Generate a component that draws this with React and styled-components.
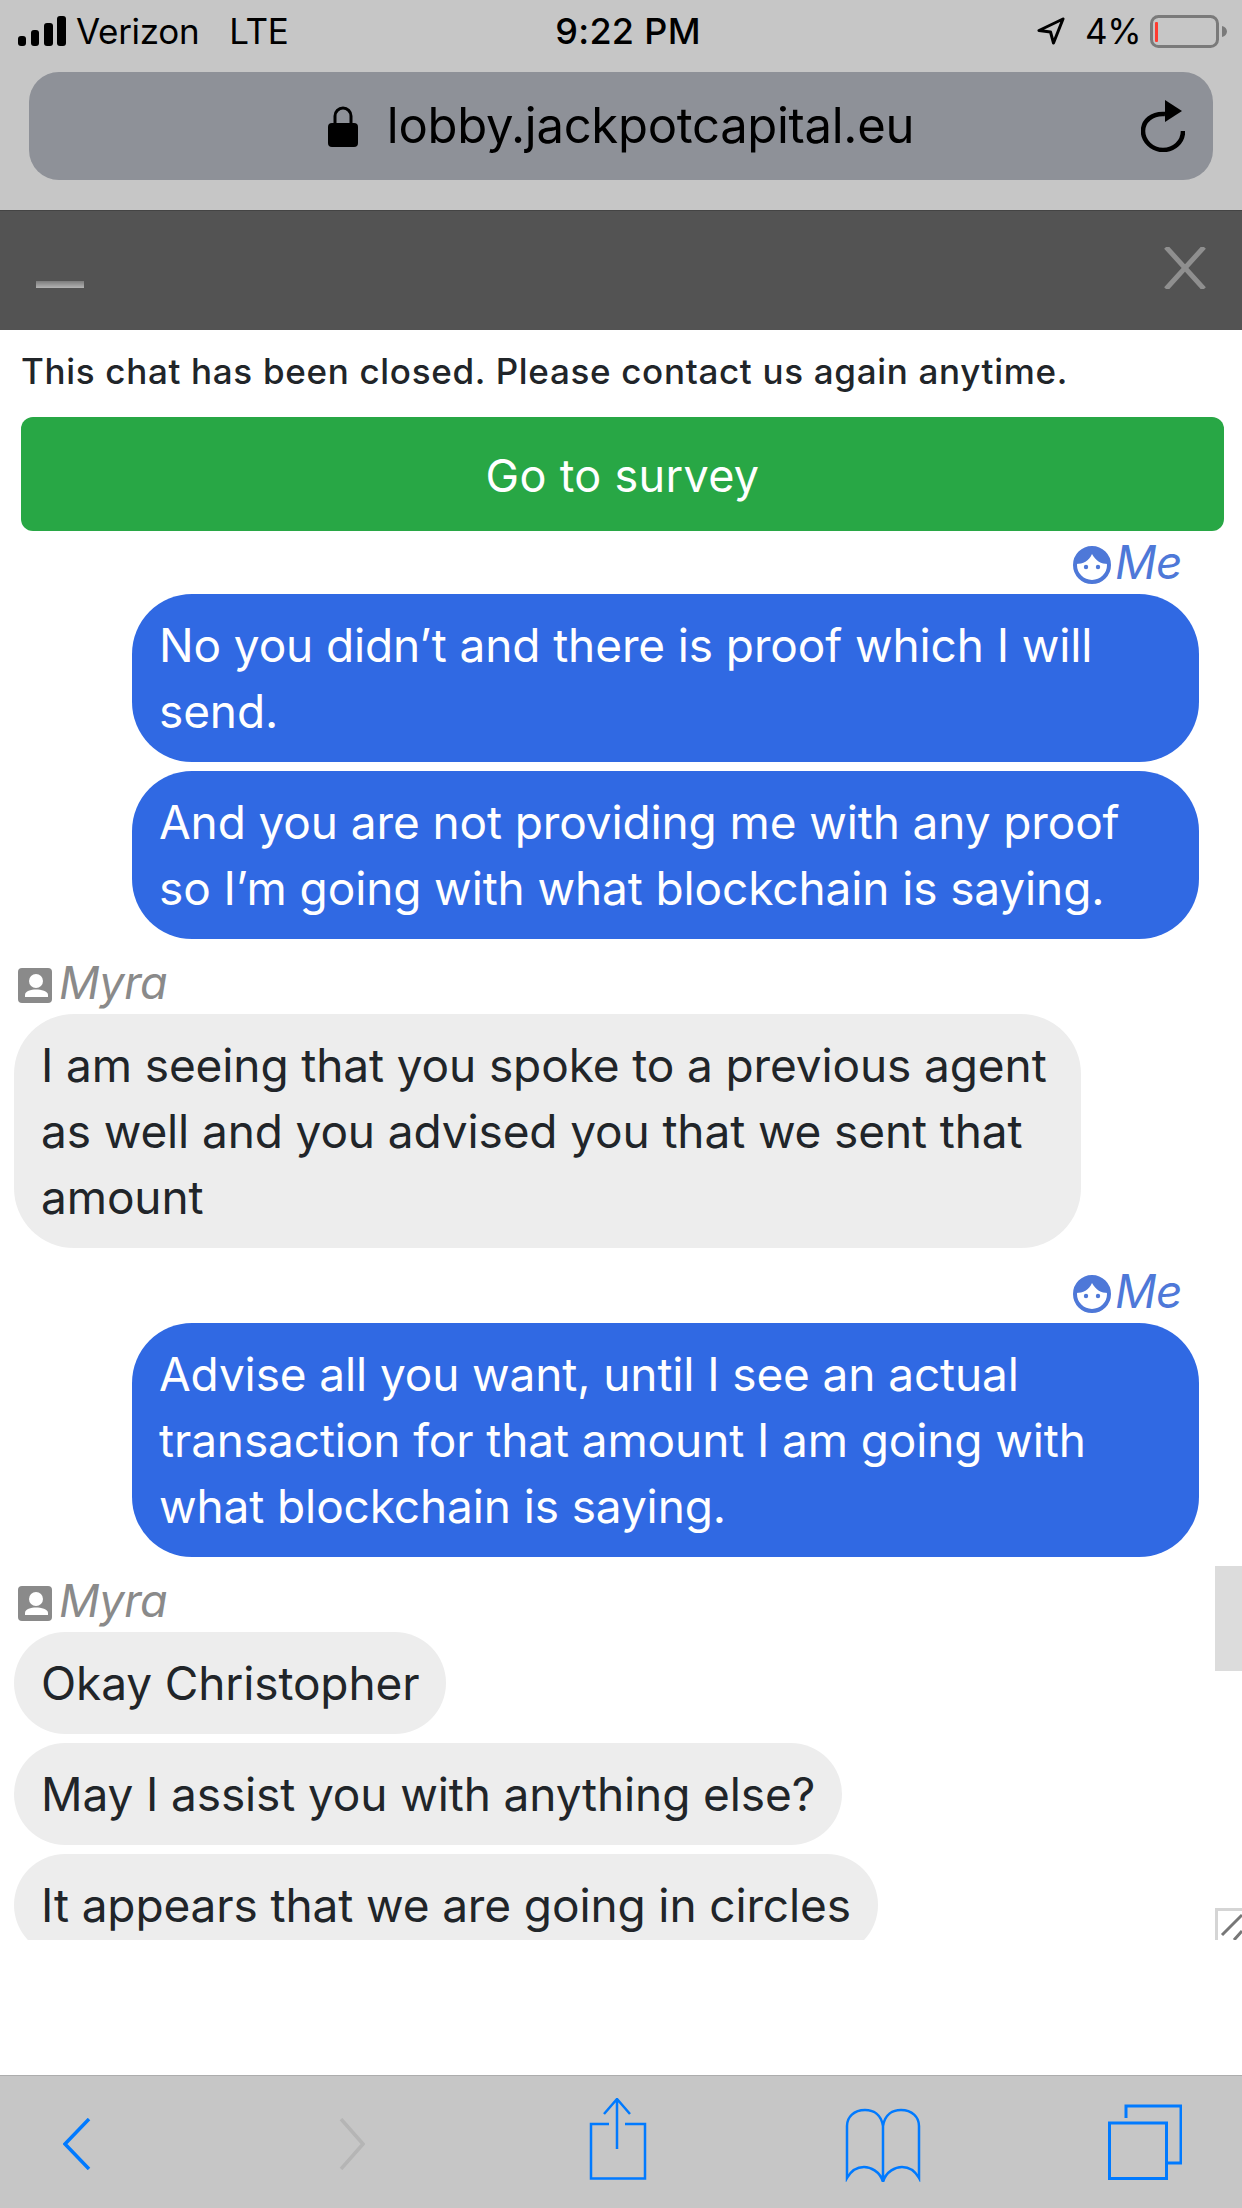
import React from "react";
import styled, { createGlobalStyle } from "styled-components";

const Global = createGlobalStyle`
  html, body { margin: 0; padding: 0; background: #fff; }
  * { box-sizing: border-box; }
  body { font-family: Inter, "Liberation Sans", sans-serif; }
`;

const Page = styled.div`
  width: 1242px;
  height: 2208px;
  display: flex;
  flex-direction: column;
  overflow: hidden;
  background: #fff;
`;

const BrowserTop = styled.header`
  height: 210px;
  flex: none;
  background: #c6c6c6;
  display: flex;
  flex-direction: column;
`;

const StatusBar = styled.div`
  height: 72px;
  padding: 0 15px 10px 18px;
  display: grid;
  grid-template-columns: 1fr auto 1fr;
  align-items: center;
  color: #000;
`;

const StatusLeft = styled.div`
  display: flex;
  align-items: center;
`;

const StatusRight = styled.div`
  display: flex;
  align-items: center;
  justify-content: flex-end;
`;

const Carrier = styled.span`
  font-size: 35px;
  line-height: 40px;
  letter-spacing: -0.3px;
  margin-left: ${(p) => p.$gap}px;
`;

const Clock = styled.span`
  font-size: 36px;
  line-height: 40px;
  font-weight: 500;
  letter-spacing: 0.3px;
  margin-left: 11px;
`;

const Percent = styled.span`
  font-size: 35px;
  line-height: 40px;
  letter-spacing: -0.5px;
  margin: 0 9px 0 20px;
`;

const AddressBar = styled.div`
  height: 108px;
  margin: 0 29px;
  padding: 0 28px;
  border-radius: 30px;
  background: #8e9198;
  display: grid;
  grid-template-columns: 1fr auto 1fr;
  align-items: center;
`;

const AddressCenter = styled.div`
  grid-column: 2;
  display: flex;
  align-items: center;
  gap: 29px;
`;

const Url = styled.span`
  font-size: 49px;
  line-height: 60px;
  color: #000;
  letter-spacing: -0.3px;
`;

const ReloadSlot = styled.div`
  grid-column: 3;
  justify-self: end;
  display: flex;
`;

const ChatHeader = styled.div`
  height: 120px;
  flex: none;
  background: #535353;
  border-top: 1px solid #444;
  padding: 36px 36px 0;
  display: flex;
  justify-content: space-between;
  align-items: flex-start;
`;

const Minimize = styled.div`
  width: 48px;
  height: 7px;
  margin-top: 34px;
  background: linear-gradient(#7c7c7c, #b4b4b4);
`;

const Notice = styled.p`
  margin: 0;
  padding: 19px 21px 0;
  height: 87px;
  flex: none;
  font-size: 35px;
  font-weight: 450;
  line-height: 44px;
  color: #212529;
  letter-spacing: 0.68px;
`;

const SurveyButton = styled.button`
  flex: none;
  height: 114px;
  margin: 0 18px 0 21px;
  padding: 3px 0 0;
  border: 0;
  border-radius: 12px;
  background: #28a745;
  color: #fff;
  font: 400 45px/60px Inter, "Liberation Sans", sans-serif;
  letter-spacing: 0.3px;
`;

const ChatArea = styled.div`
  position: relative;
  height: 1409px;
  flex: none;
  overflow: hidden;
`;

const Log = styled.div`
  display: flex;
  flex-direction: column;
  padding-top: 9px;
`;

const Label = styled.div`
  display: flex;
  align-items: center;
  height: 54px;
  padding-bottom: 4px;
  gap: ${(p) => (p.$me ? 4 : 7)}px;
  font-style: italic;
  font-size: ${(p) => (p.$me ? 46 : 45)}px;
  letter-spacing: -0.5px;
  align-self: ${(p) => (p.$me ? "flex-end" : "flex-start")};
  color: ${(p) => (p.$me ? "#4e78d8" : "#8a8a8a")};
  margin: ${(p) => p.$top || 0}px ${(p) => (p.$me ? 60 : 0)}px 0 ${(p) => (p.$me ? 0 : 18)}px;
`;

const LabelName = styled.span`
  padding-bottom: 6px;
`;

const Bubble = styled.div`
  max-width: 1067px;
  padding: 18px 27px;
  margin-bottom: 9px;
  font-size: 46px;
  line-height: 66px;
  letter-spacing: -0.12px;
  border-radius: 60px;
  align-self: ${(p) => (p.$me ? "flex-end" : "flex-start")};
  margin-right: ${(p) => (p.$me ? 43 : 0)}px;
  margin-left: ${(p) => (p.$me ? 0 : 14)}px;
  width: ${(p) => (p.$wide ? "1067px" : "auto")};
  background: ${(p) => (p.$me ? "#3069e3" : "#ededed")};
  color: ${(p) => (p.$me ? "#fff" : "#212529")};
`;

const ScrollThumb = styled.div`
  position: absolute;
  right: 0;
  top: 1035px;
  width: 27px;
  height: 105px;
  background: #dcdcdc;
`;

const Resizer = styled.div`
  position: absolute;
  right: 0;
  bottom: 0;
  width: 27px;
  height: 32px;
  border-top: 3px solid #d5d5d5;
  border-left: 3px solid #d5d5d5;
  display: flex;
`;

const Spacer = styled.div`
  flex: 1;
`;

const Toolbar = styled.nav`
  height: 133px;
  flex: none;
  background: #c6c6c6;
  border-top: 1px solid #adadad;
  display: flex;
  align-items: flex-start;
  padding-top: 22px;
`;

const ToolIcon = styled.svg`
  display: block;
  flex: none;
  margin-left: ${(p) => p.$left}px;
  margin-top: ${(p) => p.$top || 0}px;
  fill: none;
  stroke: ${(p) => p.$color || "#007aff"};
`;

const Me = () => (
  <svg width="38" height="38" viewBox="0 0 38 38">
    <circle cx="19" cy="19" r="17" fill="#fff" stroke="#4e78d8" strokeWidth="4" />
    <path d="M3 18C4 8 11 2 19 2s15 6 16 16c-7 0-12-3-16-10-3 7-9 10-16 10z" fill="#4e78d8" />
    <circle cx="13" cy="21" r="2.2" fill="#4e78d8" />
    <circle cx="25" cy="21" r="2.2" fill="#4e78d8" />
  </svg>
);

const Agent = () => (
  <svg width="34" height="35" viewBox="0 0 34 35">
    <rect width="34" height="35" rx="4" fill="#8a8a8a" />
    <circle cx="18" cy="13" r="7" fill="#fff" />
    <path d="M7 29v-2c0-4 6-5.500 11-5.500s12 1.500 12 5.500v2z" fill="#fff" />
  </svg>
);

export default function App() {
  return (
    <Page>
      <Global />
      <BrowserTop>
        <StatusBar>
          <StatusLeft>
            <svg width="48" height="30" viewBox="0 0 48 30">
              <rect x="0" y="20" width="8" height="10" rx="3" fill="#000" />
              <rect x="13" y="14" width="8" height="16" rx="3" fill="#000" />
              <rect x="26" y="7" width="9" height="23" rx="3" fill="#000" />
              <rect x="39" y="0" width="9" height="30" rx="3" fill="#000" />
            </svg>
            <Carrier $gap={10}>Verizon</Carrier>
            <Carrier $gap={30}>LTE</Carrier>
          </StatusLeft>
          <Clock>9:22 PM</Clock>
          <StatusRight>
            <svg width="28" height="28" viewBox="0 0 28 28">
              <path d="M26 2 2 13.500l11.500 1.500 3 11z" fill="none" stroke="#000" strokeWidth="3" strokeLinejoin="round" />
            </svg>
            <Percent>4%</Percent>
            <svg width="77" height="33" viewBox="0 0 77 33">
              <rect x="1.5" y="1.5" width="66" height="30" rx="7" fill="none" stroke="#7a7a7a" strokeWidth="3" />
              <rect x="5" y="7" width="3" height="20" rx="1" fill="#ff3b30" />
              <path d="M72 11c3 .5 5 3 5 5.500s-2 5-5 5.500z" fill="#7a7a7a" />
            </svg>
          </StatusRight>
        </StatusBar>
        <AddressBar>
          <AddressCenter>
            <svg width="30" height="41" viewBox="0 0 30 41">
              <path d="M7 19v-9a8 8 0 0 1 16 0v9" fill="none" stroke="#000" strokeWidth="3" />
              <rect x="0" y="17" width="30" height="24" rx="4" fill="#000" />
            </svg>
            <Url>lobby.jackpotcapital.eu</Url>
          </AddressCenter>
          <ReloadSlot>
            <svg width="44" height="52" viewBox="0 0 44 52">
              <path d="M24 14C11 13 2 21 2 31c0 10 9 19 20 19s20-8 20-19" fill="none" stroke="#000" strokeWidth="4.500" />
              <path d="M24 0l17 11-17 11z" fill="#000" />
            </svg>
          </ReloadSlot>
        </AddressBar>
      </BrowserTop>
      <ChatHeader>
        <Minimize />
        <svg width="42" height="42" viewBox="0 0 42 42">
          <path d="M2 0l38 42M40 0 2 42" stroke="#8f8f8f" strokeWidth="5" fill="none" />
        </svg>
      </ChatHeader>
      <Notice>This chat has been closed. Please contact us again anytime.</Notice>
      <SurveyButton>Go to survey</SurveyButton>
      <ChatArea>
        <Log>
          <Label $me><Me /><LabelName>Me</LabelName></Label>
          <Bubble $me $wide>No you didn’t and there is proof which I will send.</Bubble>
          <Bubble $me $wide>And you are not providing me with any proof so I’m going with what blockchain is saying.</Bubble>
          <Label $top={12}><Agent /><LabelName>Myra</LabelName></Label>
          <Bubble $wide>I am seeing that you spoke to a previous agent as well and you advised you that we sent that amount</Bubble>
          <Label $me $top={12}><Me /><LabelName>Me</LabelName></Label>
          <Bubble $me $wide>Advise all you want, until I see an actual transaction for that amount I am going with what blockchain is saying.</Bubble>
          <Label $top={12}><Agent /><LabelName>Myra</LabelName></Label>
          <Bubble>Okay Christopher</Bubble>
          <Bubble>May I assist you with anything else?</Bubble>
          <Bubble>It appears that we are going in circles</Bubble>
        </Log>
        <ScrollThumb />
        <Resizer>
          <svg width="24" height="29" viewBox="0 0 24 29">
            <path d="M4 24 24 4M16 29 24 20" stroke="#777" strokeWidth="3" fill="none" />
          </svg>
        </Resizer>
      </ChatArea>
      <Spacer />
      <Toolbar>
        <ToolIcon $left={63} $top={20} width="28" height="52" viewBox="0 0 28 52" strokeWidth="3.500">
          <path d="M26 1 2 26l24 25" />
        </ToolIcon>
        <ToolIcon $left={248} $top={20} $color="#b5b5b5" width="26" height="52" viewBox="0 0 26 52" strokeWidth="3.500">
          <path d="M2 1l22 25L2 51" />
        </ToolIcon>
        <ToolIcon $left={224} width="58" height="82" viewBox="0 0 58 82" strokeWidth="2.500">
          <path d="M20 26H2v54.500h54V26H36" />
          <path d="M28 1v50M15 16 28 1l13 15" />
        </ToolIcon>
        <ToolIcon $left={198} $top={10} width="76" height="74" viewBox="0 0 76 74" strokeWidth="2.500">
          <path d="M38 72V18C36 6 28 2 20 2 9 2 2 9 2 18v52c5-9 11-11 17-11s16 4 19 15c3-11 13-15 19-15s12 2 17 11V18c0-9-7-16-18-16-8 0-16 4-18 16" />
        </ToolIcon>
        <ToolIcon $left={187} $top={6} width="74" height="76" viewBox="0 0 74 76" strokeWidth="3">
          <path d="M18 14V2h55v57H60" />
          <path d="M1.500 19h57v55.500h-57z" />
        </ToolIcon>
      </Toolbar>
    </Page>
  );
}
